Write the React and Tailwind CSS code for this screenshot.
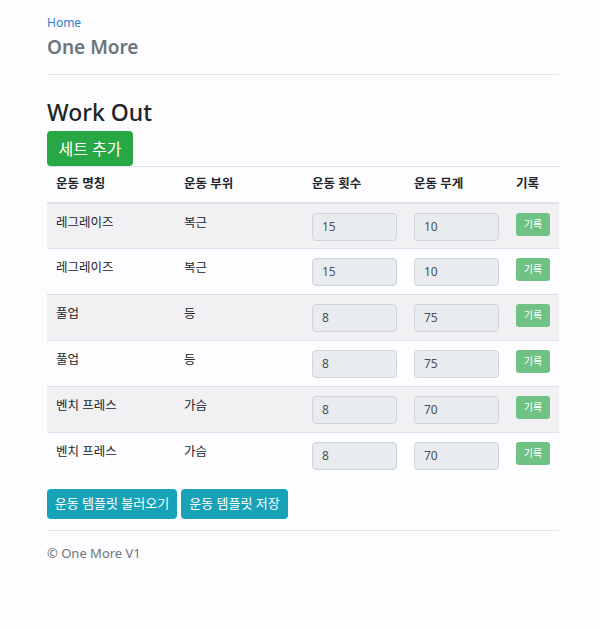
import React from 'react';

const rows = [
  { name: '레그레이즈', part: '복근', count: 15, weight: 10 },
  { name: '레그레이즈', part: '복근', count: 15, weight: 10 },
  { name: '풀업', part: '등', count: 8, weight: 75 },
  { name: '풀업', part: '등', count: 8, weight: 75 },
  { name: '벤치 프레스', part: '가슴', count: 8, weight: 70 },
  { name: '벤치 프레스', part: '가슴', count: 8, weight: 70 },
];

const font = { fontFamily: '"Noto Sans", "Noto Sans CJK KR", sans-serif' };

const App = () => (
  <div className="min-h-[629px] bg-[#fdfcfe] text-[#212529]" style={font}>
    <div className="ml-[47px] w-[512px] pt-[15px]">
      <a className="block text-[12px] leading-[16px] text-[#2f80d1]">Home</a>
      <h2 className="mt-[3px] text-[19px] leading-[26px] font-semibold text-[#6c757d]">One More</h2>
      <hr className="mt-[14px] border-t border-[#e5e5e8]" />

      <h1 className="mt-[22px] text-[23px] leading-[30px] font-medium">Work Out</h1>
      <button className="mt-[4px] h-[35px] w-[86px] rounded bg-[#28a745] text-[16px] text-white">세트 추가</button>

      <table className="w-full table-fixed border-collapse text-[12.5px]">
        <colgroup>
          <col className="w-[128px]" />
          <col className="w-[128px]" />
          <col className="w-[102px]" />
          <col className="w-[102px]" />
          <col className="w-[52px]" />
        </colgroup>
        <thead>
          <tr className="h-[36px] border-t border-[#dee2e6] border-b-2 border-b-[#dee2e6]">
            <th className="px-[9px] text-left font-bold">운동 명칭</th>
            <th className="px-[9px] text-left font-bold">운동 부위</th>
            <th className="px-[9px] text-left font-bold">운동 횟수</th>
            <th className="px-[9px] text-left font-bold">운동 무게</th>
            <th className="px-[9px] text-left font-bold">기록</th>
          </tr>
        </thead>
        <tbody>
          {rows.map((r, i) => (
            <tr key={i} className={`border-t border-[#dee2e6] ${i % 2 === 0 ? 'bg-[#f1f0f3]' : ''}`}>
              <td className="h-[46px] px-[9px] pt-[9px] align-top leading-[20px]">{r.name}</td>
              <td className="px-[9px] pt-[9px] align-top leading-[20px]">{r.part}</td>
              <td className="px-[9px] pt-[9px] align-top">
                <div className="flex h-[28px] w-[85px] items-center rounded border border-[#ced4da] bg-[#e9ecef] px-[9px] text-[12px] text-[#495057]">{r.count}</div>
              </td>
              <td className="px-[9px] pt-[9px] align-top">
                <div className="flex h-[28px] w-[85px] items-center rounded border border-[#ced4da] bg-[#e9ecef] px-[9px] text-[12px] text-[#495057]">{r.weight}</div>
              </td>
              <td className="px-[9px] pt-[9px] align-top">
                <button className="h-[23px] w-[34px] rounded-[3px] bg-[#6fc283] text-[10px] text-white">기록</button>
              </td>
            </tr>
          ))}
        </tbody>
      </table>

      <div className="mt-[10px] flex gap-[4px]">
        <button className="h-[30px] w-[130px] rounded bg-[#17a2b8] text-[13px] text-white">운동 템플릿 불러오기</button>
        <button className="h-[30px] w-[107px] rounded bg-[#17a2b8] text-[13px] text-white">운동 템플릿 저장</button>
      </div>

      <hr className="mt-[11px] border-t border-[#e5e5e8]" />
      <p className="mt-[13px] text-[13px] text-[#6c757d]">© One More V1</p>
    </div>
  </div>
);

export default App;
